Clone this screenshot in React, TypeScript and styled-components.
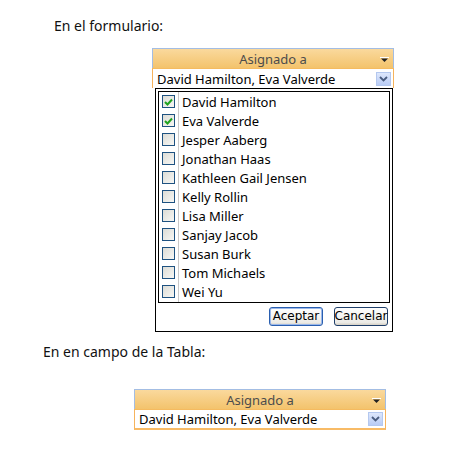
import React from "react";
import styled, { createGlobalStyle } from "styled-components";

const Global = createGlobalStyle`
  html, body { margin: 0; padding: 0; background: #fff; }
  body { font-family: "Open Sans", "Noto Sans", sans-serif; color: #000; }
`;

const Page = styled.div`
  width: 454px;
  height: 474px;
  padding-top: 16px;
  box-sizing: border-box;
  display: flex;
  flex-direction: column;
`;

const Caption = styled.div<{ $indent: number; $gap: number }>`
  margin-left: ${(p) => p.$indent}px;
  margin-bottom: ${(p) => p.$gap}px;
  font-family: "Noto Sans", sans-serif;
  font-size: 14px;
  line-height: 20px;
  color: #111;
`;

const Field = styled.div<{ $left: number; $width: number }>`
  margin-left: ${(p) => p.$left}px;
  width: ${(p) => p.$width}px;
  display: flex;
  flex-direction: column;
`;

const Header = styled.div`
  position: relative;
  height: 20px;
  box-sizing: border-box;
  border: 1px solid #a3bde3;
  border-bottom: none;
  background: linear-gradient(#fad99d, #f3c36c);
  display: flex;
  align-items: center;
  justify-content: center;
  font-family: "Noto Sans", sans-serif;
  font-size: 13px;
  color: #4c4c4c;
`;

const HeaderArrow = styled.svg`
  position: absolute;
  right: 4px;
  top: 8px;
`;

const ValueRow = styled.div<{ $closed?: boolean }>`
  height: ${(p) => (p.$closed ? 21 : 20)}px;
  box-sizing: border-box;
  border-left: 1px solid #f6b35c;
  border-right: 1px solid #f6b35c;
  border-top: 1px solid #f5bb60;
  border-bottom: ${(p) => (p.$closed ? "2px solid #f8bb66" : "none")};
  background: #fff;
  display: flex;
  align-items: center;
  padding-left: 4px;
  padding-right: 2px;
  font-family: "Noto Sans", sans-serif;
  font-size: 13px;
  color: #000;
`;

const ValueText = styled.span`
  flex: 1;
  white-space: nowrap;
  overflow: hidden;
`;

const DropButton = styled.div`
  width: 15px;
  height: 14px;
  box-sizing: border-box;
  border: 1px solid #b4c8ef;
  background: linear-gradient(#dde7fc, #b9ccf5);
  display: flex;
  align-items: center;
  justify-content: center;
`;

const Popup = styled.div`
  margin-left: 155px;
  width: 238px;
  height: 244px;
  box-sizing: border-box;
  border: 1px solid #000;
  background: #fff;
  padding: 2px;
  display: flex;
  flex-direction: column;
  margin-bottom: 10px;
`;

const ListBox = styled.div`
  height: 212px;
  box-sizing: border-box;
  border: 1px solid #000;
  background: linear-gradient(to right, transparent 19px, #c8c8c8 19px, #c8c8c8 20px, transparent 20px);
`;

const Row = styled.div`
  height: 19px;
  display: flex;
  align-items: center;
`;

const CheckCell = styled.div`
  width: 20px;
  display: flex;
  justify-content: center;
  padding-right: 1px;
  box-sizing: border-box;
`;

const Box = styled.div`
  width: 13px;
  height: 13px;
  box-sizing: border-box;
  border: 1px solid #1e5281;
  background: linear-gradient(135deg, #dcdcd6, #f7f7f4);
  display: flex;
  align-items: center;
  justify-content: center;
`;

const Name = styled.span`
  margin-left: 3px;
  font-family: "Noto Sans", sans-serif;
  font-size: 13px;
  color: #000;
  white-space: nowrap;
`;

const ButtonBar = styled.div`
  flex: 1;
  display: flex;
  justify-content: flex-end;
  align-items: center;
  gap: 11px;
  padding-right: 2px;
`;

const Button = styled.button<{ $default?: boolean; $w: number }>`
  width: ${(p) => p.$w}px;
  height: 19px;
  padding: 0;
  box-sizing: border-box;
  border: 1px solid ${(p) => (p.$default ? "#2a5fb0" : "#1f3f6a")};
  box-shadow: ${(p) => (p.$default ? "inset 0 0 0 1px #9bb8ea" : "none")};
  border-radius: 3px;
  background: linear-gradient(#ffffff, #ecebe6 85%, #d6d0c5);
  font-family: "DejaVu Sans", sans-serif;
  font-size: 12px;
  color: #000;
  display: flex;
  align-items: center;
  justify-content: center;
`;

const names = [
  "David Hamilton",
  "Eva Valverde",
  "Jesper Aaberg",
  "Jonathan Haas",
  "Kathleen Gail Jensen",
  "Kelly Rollin",
  "Lisa Miller",
  "Sanjay Jacob",
  "Susan Burk",
  "Tom Michaels",
  "Wei Yu",
];
const checked = new Set(["David Hamilton", "Eva Valverde"]);

const Arrow = () => (
  <HeaderArrow width="9" height="5" viewBox="0 0 9 5">
    <line x1="0" y1="0.5" x2="9" y2="0.5" stroke="#fff" strokeWidth="1" />
    <path d="M1 1.5 H8 L4.5 5 Z" fill="#222" />
  </HeaderArrow>
);

const Chevron = () => (
  <svg width="9" height="6" viewBox="0 0 9 6">
    <path d="M1 1 L4.5 4.5 L8 1" fill="none" stroke="#4a5d80" strokeWidth="1.8" />
  </svg>
);

const Tick = () => (
  <svg width="9" height="8" viewBox="0 0 9 8">
    <path d="M1 4 L3.5 6.5 L8 1.5" fill="none" stroke="#1fa31f" strokeWidth="2" />
  </svg>
);

const FieldBox = ({ left, width, closed }: { left: number; width: number; closed?: boolean }) => (
  <Field $left={left} $width={width}>
    <Header>
      Asignado a
      <Arrow />
    </Header>
    <ValueRow $closed={closed}>
      <ValueText>David Hamilton, Eva Valverde</ValueText>
      <DropButton>
        <Chevron />
      </DropButton>
    </ValueRow>
  </Field>
);

export default function App() {
  return (
    <Page>
      <Global />
      <Caption $indent={54} $gap={12}>En el formulario:</Caption>
      <FieldBox left={152} width={242} />
      <Popup>
        <ListBox>
          {names.map((n) => (
            <Row key={n}>
              <CheckCell>
                <Box>{checked.has(n) && <Tick />}</Box>
              </CheckCell>
              <Name>{n}</Name>
            </Row>
          ))}
        </ListBox>
        <ButtonBar>
          <Button $default $w={54}>Aceptar</Button>
          <Button $w={54}>Cancelar</Button>
        </ButtonBar>
      </Popup>
      <Caption $indent={43} $gap={27}>En en campo de la Tabla:</Caption>
      <FieldBox left={134} width={252} closed />
    </Page>
  );
}
